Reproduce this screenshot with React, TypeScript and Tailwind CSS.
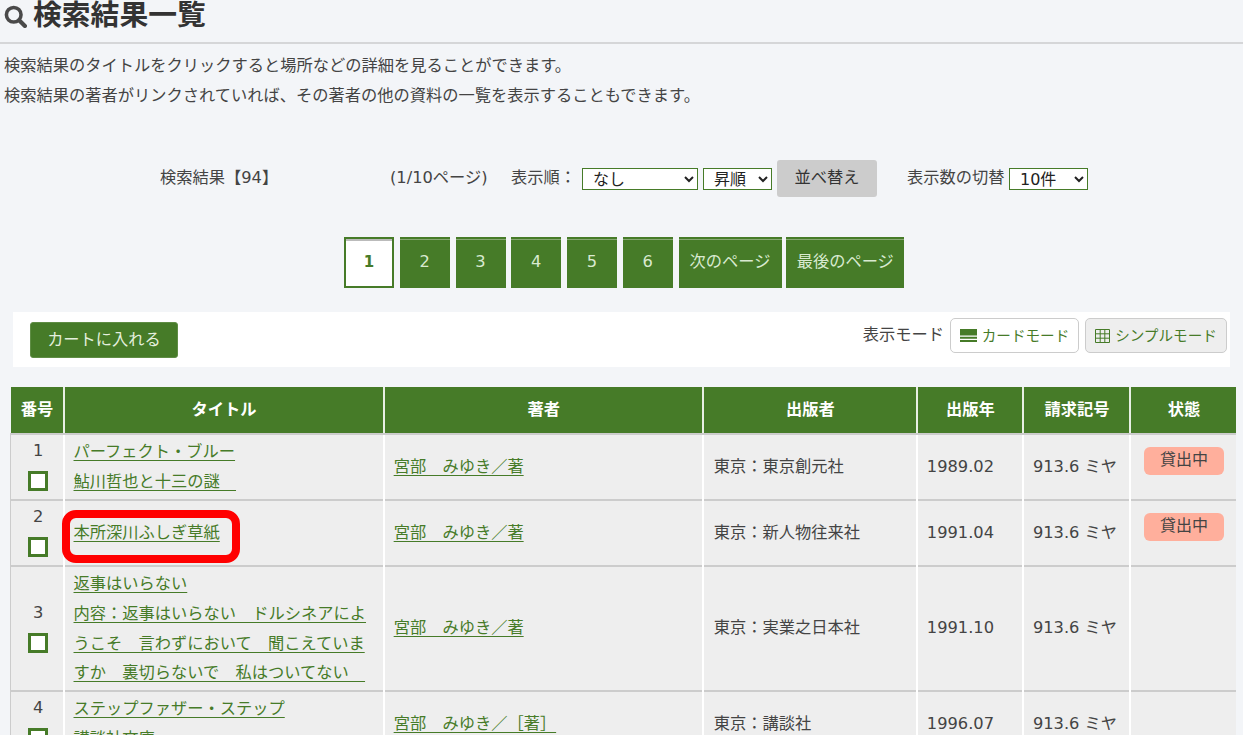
import React from "react";

const green = "bg-[#467b28]";

function Check() {
  return <span className="block w-[20px] h-[20px] mx-auto border-[3px] border-[#467b28] bg-white" />;
}

function Badge() {
  return (
    <span className="block mx-auto w-[80px] h-[28px] rounded-[6px] bg-[#ffaf9c] text-[16px] leading-[26px] text-center text-[#444]">
      貸出中
    </span>
  );
}

function PageBtn({ label, w, active, extra }: { label: string; w: string; active?: boolean; extra?: string }) {
  if (active) {
    return (
      <span className={`${w} h-[51px] flex items-center justify-center border-2 border-[#467b28] bg-white font-bold text-[15px] text-[#467b28] shadow-[inset_0_2px_0_#bbbbbb]`}>
        {label}
      </span>
    );
  }
  return (
    <span className={`${w} ${extra ?? ""} h-[51px] flex items-center justify-center ${green} text-[#d9ead0] shadow-[inset_0_2px_0_#467b28,inset_0_3px_0_#87a873]`}>
      {label}
    </span>
  );
}

const rows = [
  { n: "1", h: "h-[66px]", t: ["パーフェクト・ブルー", "鮎川哲也と十三の謎　"], a: "宮部　みゆき／著", p: "東京：東京創元社", y: "1989.02", s: true },
  { n: "2", h: "h-[66px]", t: ["本所深川ふしぎ草紙"], a: "宮部　みゆき／著", p: "東京：新人物往来社", y: "1991.04", s: true },
  { n: "3", h: "h-[125px]", t: ["返事はいらない", "内容：返事はいらない　ドルシネアによ", "うこそ　言わずにおいて　聞こえていま", "すか　裏切らないで　私はついてない　"], a: "宮部　みゆき／著", p: "東京：実業之日本社", y: "1991.10", s: false },
  { n: "4", h: "h-[66px]", t: ["ステップファザー・ステップ", "講談社文庫"], a: "宮部　みゆき／［著］", p: "東京：講談社", y: "1996.07", s: false },
];

const heads: [string, string][] = [
  ["番号", "w-[53px]"],
  ["タイトル", "w-[320px]"],
  ["著者", "w-[319px]"],
  ["出版者", "w-[214px]"],
  ["出版年", "w-[106px]"],
  ["請求記号", "w-[107px]"],
  ["状態", "w-[106px]"],
];

export default function App() {
  return (
    <div
      className="relative h-[735px] w-[1243px] overflow-hidden bg-[#f3f5f8] text-[16.25px] text-[#444]"
      style={{ fontFamily: '"DejaVu Sans", "Noto Sans CJK JP", sans-serif' }}
    >
      <div className="h-[44px] border-b-2 border-[#d5d6d8] flex items-start pl-[4px]">
        <svg width="23" height="23" viewBox="0 0 22 22" className="mt-[5px] mr-[6px] shrink-0">
          <circle cx="9.3" cy="9.3" r="7" fill="none" stroke="#4a4a4a" strokeWidth="3.4" />
          <path d="M14.5 14.5 L20 20" stroke="#4a4a4a" strokeWidth="4" strokeLinecap="round" />
        </svg>
        <h1 className="text-[28.8px] font-bold leading-[42px] -mt-[6px] text-[#333]">検索結果一覧</h1>
      </div>

      <div className="pl-[4px] pt-[7px] leading-[30px]">
        <p>検索結果のタイトルをクリックすると場所などの詳細を見ることができます。</p>
        <p>検索結果の著者がリンクされていれば、その著者の他の資料の一覧を表示することもできます。</p>
      </div>

      <div className="flex items-center h-[37px] mt-[49px]">
        <span className="ml-[160px] w-[230px]">検索結果【94】</span>
        <span className="w-[121px]">(1/10ページ)</span>
        <span className="w-[71px]">表示順：</span>
        <select className="w-[116px] h-[22px] border border-[#467b28] bg-white pl-[6px] text-[16px] leading-[20px] text-[#222]">
          <option>なし</option>
        </select>
        <select className="ml-[5px] w-[69px] h-[22px] border border-[#467b28] bg-white pl-[6px] text-[16px] leading-[20px] text-[#222]">
          <option>昇順</option>
        </select>
        <span className="ml-[5px] w-[100px] h-[37px] rounded-[3px] bg-[#cccccc] flex items-center justify-center text-[#333]">
          並べ替え
        </span>
        <span className="ml-[30px] w-[102px]">表示数の切替</span>
        <select className="w-[79px] h-[22px] border border-[#467b28] bg-white pl-[6px] text-[16px] leading-[20px] text-[#222]">
          <option>10件</option>
        </select>
      </div>

      <div className="flex mt-[40px] pl-[344px] gap-x-[5.75px]">
        <PageBtn label="1" w="w-[50px]" active />
        <PageBtn label="2" w="w-[50px]" />
        <PageBtn label="3" w="w-[50px]" />
        <PageBtn label="4" w="w-[50px]" />
        <PageBtn label="5" w="w-[50px]" />
        <PageBtn label="6" w="w-[50px]" />
        <PageBtn label="次のページ" w="w-[103px]" />
        <PageBtn label="最後のページ" w="w-[118px]" extra="-ml-[1px]" />
      </div>

      <div className="mt-[24px] ml-[13px] w-[1217px] h-[55px] bg-white flex items-start justify-between pl-[17px] pr-[3px]">
        <span className={`mt-[10px] w-[148px] h-[36px] rounded-[3px] ${green} border border-[#5f8d45] text-[#e4efdd] flex items-center justify-center`}>
          カートに入れる
        </span>
        <div className="flex items-start mt-[6px]">
          <span className="leading-[33px] mr-[6px]">表示モード</span>
          <span className="w-[129px] h-[35px] rounded-[5px] border border-[#ccc] bg-white flex items-center justify-center gap-[5px] text-[14.6px] text-[#467b28]">
            <svg width="17" height="13" viewBox="0 0 17 13">
              <path d="M0 0h17v6.5H0zM0 7.8h17v2H0zM0 11h17v2H0z" fill="#467b28" />
            </svg>
            カードモード
          </span>
          <span className="ml-[6px] w-[142px] h-[35px] rounded-[5px] border border-[#ccc] bg-[#eeeeee] flex items-center justify-center gap-[5px] text-[14.6px] text-[#467b28]">
            <svg width="15" height="14" viewBox="0 0 15 14">
              <path d="M.5.5h14v13H.5zM5.2.5v13M9.8.5v13M.5 4.8h14M.5 9.2h14" fill="none" stroke="#467b28" />
            </svg>
            シンプルモード
          </span>
        </div>
      </div>

      <table className="mt-[20px] ml-[10px] table-fixed border-collapse w-[1226px]">
        <thead>
          <tr className="h-[47px]">
            {heads.map(([h, w], i) => (
              <th
                key={h}
                className={`${w} ${green} font-bold text-white text-center p-0 pl-[1px] border-b-2 border-b-[#cccccc] ${i > 0 ? "border-l-2 border-l-[#e8efe4]" : ""}`}
              >
                {h}
              </th>
            ))}
          </tr>
        </thead>
        <tbody>
          {rows.map((r) => (
            <tr key={r.n} className={`${r.h} bg-[#eeeeee] border-b-2 border-[#cccccc]`}>
              <td className="p-0 pl-[3px] pb-[6px] text-center align-middle border-l border-[#cccccc]">
                <div className="leading-[28px] pb-[6px]">{r.n}</div>
                <Check />
              </td>
              <td className="border-l-2 border-white pl-[9px] pr-[5px] align-middle">
                <div className="text-[#467b28] underline underline-offset-[3px] leading-[29.6px]">
                  {r.t.map((l) => (
                    <div key={l} className="whitespace-nowrap">{l}</div>
                  ))}
                </div>
              </td>
              <td className="border-l-2 border-white pl-[9px] text-[#467b28] underline underline-offset-[3px] whitespace-nowrap">{r.a}</td>
              <td className="border-l-2 border-white pl-[10px] whitespace-nowrap">{r.p}</td>
              <td className="border-l-2 border-white pl-[9px] whitespace-nowrap">{r.y}</td>
              <td className="border-l-2 border-white pl-[9px] whitespace-nowrap">913.6 ミヤ</td>
              <td className="border-l-2 border-white align-top pt-[12px] pl-[1px]">{r.s ? <Badge /> : null}</td>
            </tr>
          ))}
        </tbody>
      </table>

      <div className="absolute left-[62px] top-[510px] w-[178px] h-[53px] border-[8px] border-[#ff0000] rounded-[14px]" />
    </div>
  );
}
